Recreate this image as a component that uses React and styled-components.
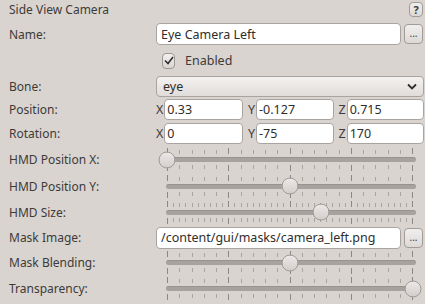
import styled, { createGlobalStyle } from "styled-components";

const GlobalStyle = createGlobalStyle`
  body {
    margin: 0;
    background: #dad4d1;
    font-family: "Noto Sans", "Open Sans", sans-serif;
    font-size: 12px;
    color: #3c3b37;
  }
`;

export default function App() {
  return (
    <>
      <GlobalStyle />
      <Panel>
        <TitleRow>
          <span>Side View Camera</span>
          <SmallButton>?</SmallButton>
        </TitleRow>
        <Row $h={26}>
          <Label>Name:</Label>
          <Field>
            <TextInput defaultValue="Eye Camera Left" />
            <DotsButton>...</DotsButton>
          </Field>
        </Row>
        <Row $h={27}>
          <span />
          <CheckField>
            <CheckBox>
              <svg width="10" height="9" viewBox="0 0 10 9">
                <path d="M1 4.5 L4 7.5 L9 1" fill="none" stroke="#2f2e2b" strokeWidth="1.6" />
              </svg>
            </CheckBox>
            <span>Enabled</span>
          </CheckField>
        </Row>
        <Row $h={24}>
          <Label>Bone:</Label>
          <Select>
            <span>eye</span>
            <svg width="10" height="7" viewBox="0 0 10 7">
              <path d="M1 1.5 L5 5.5 L9 1.5" fill="none" stroke="#2f2e2b" strokeWidth="1.8" />
            </svg>
          </Select>
        </Row>
        <Row $h={23}>
          <Label>Position:</Label>
          <VectorField>
            <Axis>X<NumInput defaultValue="0.33" /></Axis>
            <Axis>Y<NumInput defaultValue="-0.127" /></Axis>
            <Axis>Z<NumInput defaultValue="0.715" /></Axis>
          </VectorField>
        </Row>
        <Row $h={25}>
          <Label>Rotation:</Label>
          <VectorField>
            <Axis>X<NumInput defaultValue="0" /></Axis>
            <Axis>Y<NumInput defaultValue="-75" /></Axis>
            <Axis>Z<NumInput defaultValue="170" /></Axis>
          </VectorField>
        </Row>
        <Row $h={27}>
          <Label>HMD Position X:</Label>
          <Slider value={0} steps={20} />
        </Row>
        <Row $h={26}>
          <Label>HMD Position Y:</Label>
          <Slider value={0.5} steps={20} />
        </Row>
        <Row $h={26}>
          <Label>HMD Size:</Label>
          <Slider value={0.625} steps={40} />
        </Row>
        <Row $h={25}>
          <Label>Mask Image:</Label>
          <Field>
            <TextInput defaultValue="/content/gui/masks/camera_left.png" />
            <DotsButton>...</DotsButton>
          </Field>
        </Row>
        <Row $h={25}>
          <Label>Mask Blending:</Label>
          <Slider value={0.5} steps={20} />
        </Row>
        <Row $h={27}>
          <Label>Transparency:</Label>
          <Slider value={1} steps={20} />
        </Row>
      </Panel>
    </>
  );
}

function Slider({ value, steps }) {
  const ticks = Array.from({ length: steps + 1 }, (_, i) => i % (steps / 4) === 0);
  return (
    <SliderBox>
      <TickRow $top>
        {ticks.map((major, i) => (
          <Tick key={i} $major={major} />
        ))}
      </TickRow>
      <Groove />
      <TickRow>
        {ticks.map((major, i) => (
          <Tick key={i} $major={major} />
        ))}
      </TickRow>
      <Thumb $value={value} />
    </SliderBox>
  );
}

// Styling starts here

const Panel = styled.div`
  width: 425px;
  height: 304px;
  box-sizing: border-box;
  padding: 0 1px 0 9px;
  display: flex;
  flex-direction: column;
  overflow: hidden;
`;

const TitleRow = styled.div`
  height: 18px;
  margin-bottom: 3px;
  display: flex;
  align-items: center;
  justify-content: space-between;
`;

const Row = styled.div`
  height: ${(p) => p.$h}px;
  display: grid;
  grid-template-columns: 147px minmax(0, 1fr);
  align-items: center;
`;

const Label = styled.span`
  white-space: nowrap;
`;

const Field = styled.div`
  display: flex;
  align-items: center;
  gap: 3px;
`;

const TextInput = styled.input`
  flex: 1;
  min-width: 0;
  width: 100%;
  height: 22px;
  box-sizing: border-box;
  padding: 0 4px;
  border: 1px solid #aaa4a1;
  border-radius: 4px;
  background: #fff;
  font: inherit;
  font-size: 12.5px;
  color: #2f2e2b;
  outline: none;
`;

const ButtonBase = styled.button`
  box-sizing: border-box;
  padding: 0;
  border: 1px solid #a29c99;
  border-radius: 4px;
  background: linear-gradient(#f1efee, #dcd8d6);
  font: inherit;
  color: #3c3b37;
  display: flex;
  align-items: center;
  justify-content: center;
`;

const SmallButton = styled(ButtonBase)`
  width: 14px;
  height: 15px;
  margin-right: 1px;
  font-size: 11px;
  font-weight: bold;
`;

const DotsButton = styled(ButtonBase)`
  width: 19px;
  height: 20px;
  margin-right: 1px;
  font-size: 10px;
  line-height: 1;
  padding-bottom: 2px;
`;

const CheckField = styled.div`
  display: flex;
  align-items: center;
  gap: 10px;
  padding-left: 6px;
  font-size: 12.5px;
`;

const CheckBox = styled.span`
  width: 13px;
  height: 16px;
  box-sizing: border-box;
  border: 1px solid #9d9794;
  border-radius: 4px;
  background: linear-gradient(#f2f0ef, #d9d5d3);
  display: flex;
  align-items: center;
  justify-content: center;
`;

const Select = styled.div`
  height: 21px;
  box-sizing: border-box;
  padding: 0 6px 0 6px;
  border: 1px solid #aaa4a1;
  border-radius: 4px;
  background: linear-gradient(#f4f2f1, #e0dcda);
  display: flex;
  align-items: center;
  justify-content: space-between;
  font-size: 12.5px;
  color: #2f2e2b;
`;

const VectorField = styled.div`
  display: grid;
  grid-template-columns: 87px minmax(0, 1fr) minmax(0, 1fr);
  gap: 5px;
`;

const Axis = styled.label`
  display: flex;
  align-items: center;
  gap: 1px;
  min-width: 0;
  font-size: 12.5px;
`;

const NumInput = styled(TextInput)`
  padding: 0 2px;
  height: 21px;
`;

const SliderBox = styled.div`
  position: relative;
  height: 100%;
  display: flex;
  flex-direction: column;
  justify-content: center;
`;

const Groove = styled.div`
  height: 5px;
  margin: 0 8px 0 10px;
  border-radius: 3px;
  background: #a7a19f;
  border-top: 1px solid #99938f;
  box-sizing: border-box;
`;

const TickRow = styled.div`
  height: 6px;
  margin: ${(p) => (p.$top ? "0 11px 3px" : "3px 11px 0")};
  display: flex;
  justify-content: space-between;
  align-items: ${(p) => (p.$top ? "flex-end" : "flex-start")};
`;

const Tick = styled.span`
  width: 1px;
  height: ${(p) => (p.$major ? 6 : 4)}px;
  background: ${(p) => (p.$major ? "#8e8885" : "#aaa4a1")};
`;

const Thumb = styled.span`
  position: absolute;
  top: 50%;
  left: calc(11px + (100% - 22px) * ${(p) => p.$value});
  width: 17px;
  height: 17px;
  box-sizing: border-box;
  transform: translate(-50%, -50%);
  border: 1px solid #a19b98;
  border-radius: 50%;
  background: linear-gradient(#ebe8e7, #d3cecc);
`;
